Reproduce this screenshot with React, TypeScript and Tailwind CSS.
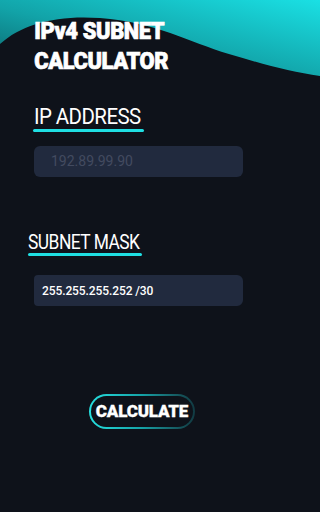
import React from "react";

export default function App() {
  return (
    <div className="relative w-full min-w-[288px] h-[512px] overflow-hidden bg-[#0e121a] font-['Roboto',_'Liberation_Sans',_sans-serif]">
      <svg
        className="absolute left-0 top-0 w-full h-[90px]"
        viewBox="0 0 288 90"
        preserveAspectRatio="none"
      >
        <defs>
          <linearGradient id="wave" x1="1" y1="0" x2="0" y2="1">
            <stop offset="0" stopColor="#1ae0e4" />
            <stop offset="0.55" stopColor="#12a3a8" />
            <stop offset="1" stopColor="#0a5f66" />
          </linearGradient>
        </defs>
        <path
          d="M0 0 H288 V76 C262 72 236 64 206 54 C170 42 140 22 90 18 C50 15 20 24 0 44 Z"
          fill="url(#wave)"
        />
      </svg>

      <div className="relative flex flex-col w-[288px]">
        <h1 className="pt-[17px] pl-[36px] text-[23px] leading-[30px] font-black text-white tracking-[-0.4px] origin-left scale-x-[0.95] [-webkit-text-stroke:0.7px_white]">
          IPv4 SUBNET
          <br />
          CALCULATOR
        </h1>

        <div className="mt-[29px] ml-[33px] flex flex-col self-start">
          <span className="pl-[1px] inline-block text-[22px] leading-[22px] text-white tracking-[-0.6px] origin-left scale-x-[0.93]">
            IP ADDRESS
          </span>
          <span className="mt-[1px] h-[3px] w-[111px] rounded-full bg-[#1fdfe3]" />
        </div>

        <div className="mt-[14px] ml-[34px] w-[209px] h-[31px] rounded-md bg-[#212a3e] flex items-center pl-[17px]">
          <span className="text-[14px] text-[#434b60]">192.89.99.90</span>
        </div>

        <div className="mt-[55px] ml-[28px] flex flex-col self-start">
          <span className="inline-block text-[20px] leading-[21px] text-white tracking-[-0.6px] origin-left scale-x-[0.87]">
            SUBNET MASK
          </span>
          <span className="mt-[0px] h-[3px] w-[114px] rounded-full bg-[#1fdfe3]" />
        </div>

        <div className="mt-[19px] ml-[34px] w-[209px] h-[31px] rounded-r-md rounded-l-sm bg-[#212a3e] flex items-center pl-[8px]">
          <span className="text-[12px] font-medium text-white tracking-[-0.1px]">255.255.255.252 /30</span>
        </div>

        <div className="mt-[88px] ml-[89px] w-[106px] h-[35px] rounded-full p-[2px] bg-gradient-to-r from-[#26e0e0] via-[#14a2a6] to-[#113a42]">
          <div className="w-full h-full rounded-full bg-[#0e121a] flex items-center justify-center">
            <span className="text-[17px] font-black text-white tracking-[-0.2px] [-webkit-text-stroke:0.3px_white]">CALCULATE</span>
          </div>
        </div>
      </div>
    </div>
  );
}
